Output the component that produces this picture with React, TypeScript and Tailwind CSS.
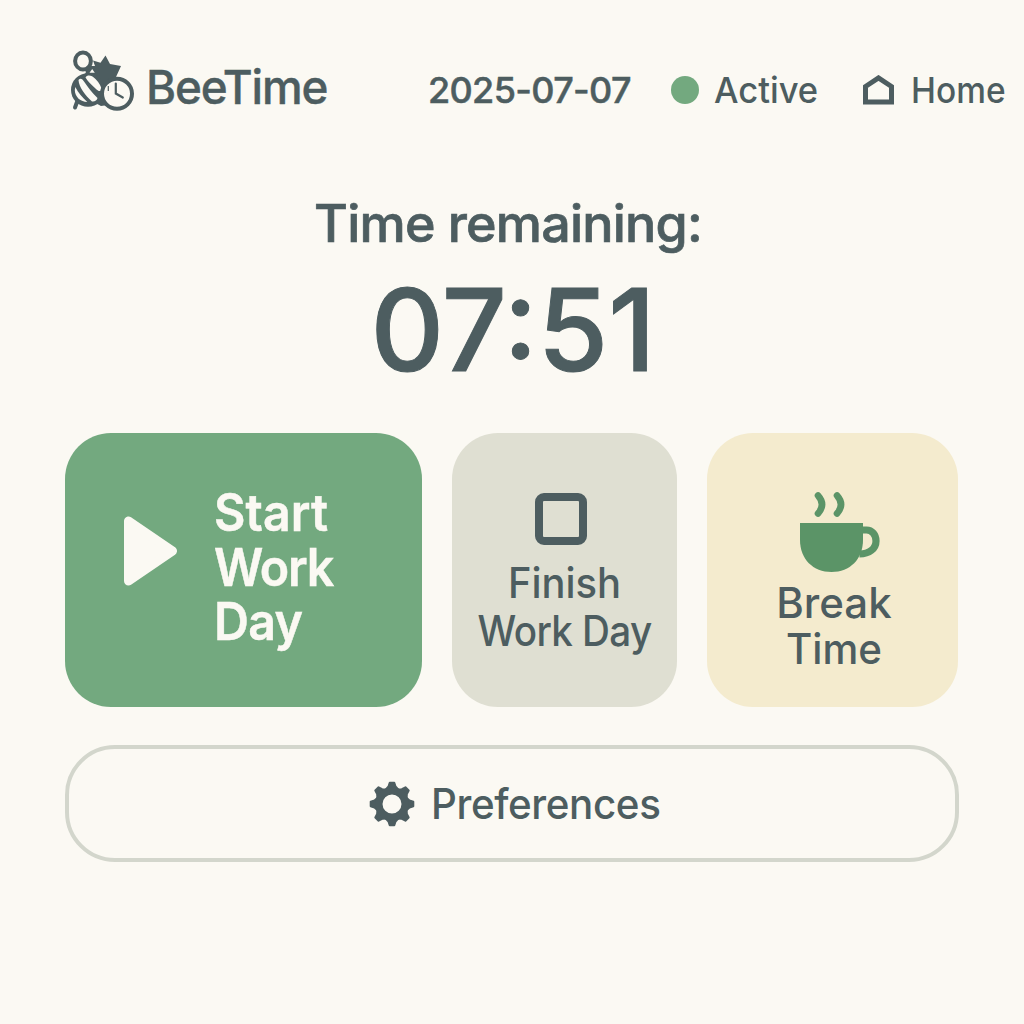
import React from "react";

function BeeLogo() {
  return (
    <svg className="h-[64px] w-[66px] shrink-0" viewBox="0 0 66 64" fill="none">
      <path d="M18 18h5l2-1-2-5.500 7.500 2.200 5-7.200 4.500 8.500 11 2-5 11-8 28-7 1-13-7-4-22z" fill="#4d5d60" />
      <path d="M16 17h12l2 10H15l1-4-3-4z" fill="#4d5d60" />
      <ellipse cx="13" cy="12" rx="7.900" ry="8.500" stroke="#4d5d60" strokeWidth="4" fill="#fbf9f3" />
      <path d="M22.200 20l2.600 3.800h-5.300z" fill="#fbf9f3" />
      <ellipse cx="18" cy="41" rx="17" ry="16.800" fill="#4d5d60" />
      <path d="M15.500 28.500c2-3 6-2.500 10 1.500 4 4 6 8 6 11-1 2-4 1-6-1.500-4-4-8-7-10-11z" fill="#fbf9f3" />
      <path d="M8.500 31c2-2.500 4-1 5.500 1.500 4 6 8 11 13.500 16.500-.5 2.500-3 4-5.500 3.500C15 46 9 38 8.500 31z" fill="#fbf9f3" />
      <path d="M5.300 38c3 6 7 10.500 12 15-6.500 0-12.500-5-12.500-12z" fill="#fbf9f3" />
      <path d="M7 53l-2 5.500" stroke="#4d5d60" strokeWidth="4" strokeLinecap="round" />
      <circle cx="47" cy="44.700" r="15" fill="#fbf9f3" stroke="#4d5d60" strokeWidth="4" />
      <path d="M45.800 34.500v10l7 4" stroke="#4d5d60" strokeWidth="2.200" strokeLinecap="round" />
      <path d="M38.300 37v5" stroke="#4d5d60" strokeWidth="1.200" />
    </svg>
  );
}

function HomeIcon() {
  return (
    <svg className="ml-px h-[30px] w-[32px] shrink-0" viewBox="0 0 32 30" fill="none">
      <path d="M2.500 11.500L15.500 2.900 28.500 11.500v15.500h-26z" stroke="#4d5d60" strokeWidth="5" />
    </svg>
  );
}

function PlayIcon() {
  return (
    <svg className="h-[70px] w-[54px] shrink-0" viewBox="0 0 54 70">
      <path d="M5.500 5v60l44-30z" fill="#fbf9f3" stroke="#fbf9f3" strokeWidth="9" strokeLinejoin="round" />
    </svg>
  );
}

function CupIcon() {
  return (
    <svg className="h-[82px] w-[82px] shrink-0" viewBox="0 0 82 82" fill="none">
      <path d="M1 32h63v17c0 19-13 32-31.500 32S1 68 1 49z" fill="#5b9467" />
      <path d="M63 39h4.500c5.500 0 9.500 4.700 9.500 11 0 7.500-6.500 13-16.500 13" stroke="#5b9467" strokeWidth="7.200" />
      <path d="M19 4.500q8 9 0 18M38 4.500q8 9 0 18" stroke="#5b9467" strokeWidth="6.600" strokeLinecap="round" />
    </svg>
  );
}

function GearIcon() {
  return (
    <svg className="h-[46px] w-[46px] shrink-0" viewBox="-23 -23 46 46" fill="#4d5d60">
      <g stroke="#4d5d60" strokeWidth="2" strokeLinejoin="round">
        {[0, 45, 90, 135, 180, 225, 270, 315].map((a) => (
          <path key={a} transform={`rotate(${a})`} d="M-7.500-13L-3.500-17.500-2.300-21.300H2.300L3.500-17.500 7.500-13z" />
        ))}
      </g>
      <circle r="13" fill="none" stroke="#4d5d60" strokeWidth="7" />
    </svg>
  );
}

export default function App() {
  return (
    <main className="h-[1024px] w-[1024px] overflow-hidden bg-[#fbf9f3] font-['Inter',sans-serif] font-medium text-[#4d5d60]">
      <header className="flex h-[181px] items-start whitespace-nowrap pl-[70px] pt-[49px]">
        <BeeLogo />
        <h1 className="ml-[10px] mt-[8px] w-[282px] origin-left scale-x-[0.975] text-[47px] leading-[60px] tracking-[-1.2px] [-webkit-text-stroke:0.4px]">BeeTime</h1>
        <div className="mt-[21px] flex items-center leading-[40px]">
          <time className="w-[243px] text-[36px] tracking-[-0.65px] [-webkit-text-stroke:0.5px]">2025-07-07</time>
          <span className="h-[28px] w-[28px] rounded-full bg-[#73a97f]" />
          <span className="ml-[15px] w-[148px] origin-left scale-x-[0.96] text-[36px]">Active</span>
          <HomeIcon />
          <span className="ml-[16px] origin-left scale-x-[0.93] text-[36px]">Home</span>
        </div>
      </header>

      <section className="flex h-[252px] flex-col items-center whitespace-nowrap pt-[13px]">
        <h2 className="mr-[8px] text-[52px] leading-[60px] tracking-[-0.8px] [-webkit-text-stroke:0.7px]">Time remaining:</h2>
        <div className="mt-[16px] ml-[2px] text-[114px] leading-[120px] [-webkit-text-stroke:1px]">07:51</div>
      </section>

      <section className="ml-[65px] flex h-[274px] gap-[30px] whitespace-nowrap">
        <button className="flex w-[357px] items-start rounded-[46px] bg-[#73a97f] pl-[58px] text-left text-[52px] leading-[54.500px] font-semibold text-[#fbf9f3]">
          <span className="mt-[83px]"><PlayIcon /></span>
          <span className="ml-[37px] mt-[53px] flex origin-left scale-x-[0.93] flex-col [-webkit-text-stroke:0.5px]">
            <span className="tracking-[0.1px]">Start</span>
            <span className="tracking-[-1.300px]">Work</span>
            <span className="tracking-[-0.800px]">Day</span>
          </span>
        </button>
        <button className="flex w-[225px] flex-col items-center rounded-[46px] bg-[#dfdfd2] pt-[60px] text-[42px] leading-[48px]">
          <span className="mr-[7px] h-[52px] w-[52px] rounded-[9px] border-8 border-[#4d5d60]" />
          <span className="mt-[14px] flex flex-col items-center">
            <span className="scale-x-[0.95]">Finish</span>
            <span className="scale-x-[0.92] tracking-[-0.7px]">Work Day</span>
          </span>
        </button>
        <button className="flex w-[251px] flex-col items-center rounded-[46px] bg-[#f4ebce] pt-[58px] text-[42px] leading-[46px]">
          <span className="ml-[14px]"><CupIcon /></span>
          <span className="ml-[3px] mt-[7px] flex flex-col items-center">
            <span>Break</span>
            <span className="scale-x-[0.96]">Time</span>
          </span>
        </button>
      </section>

      <button className="ml-[65px] mt-[38px] flex h-[117px] w-[894px] items-center rounded-[50px] border-4 border-[#d3d6cc] pl-[300px] text-[42px] leading-[50px]">
        <GearIcon />
        <span className="ml-[16px] origin-left scale-x-[0.96] tracking-[-0.4px]">Preferences</span>
      </button>
    </main>
  );
}
